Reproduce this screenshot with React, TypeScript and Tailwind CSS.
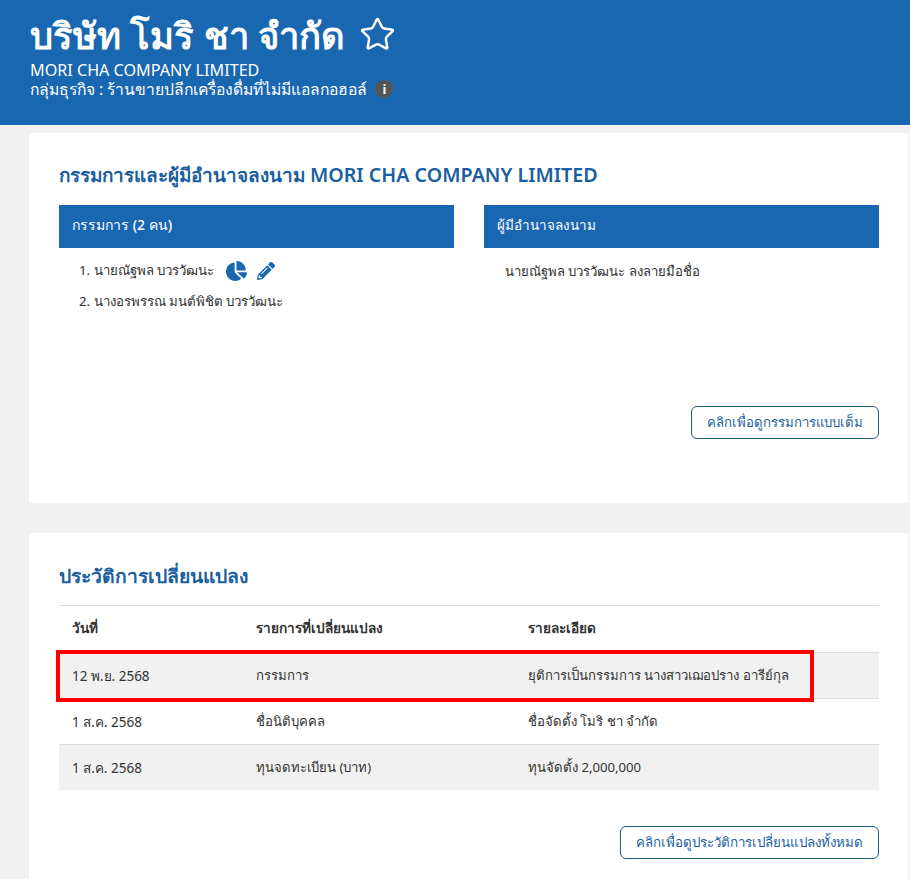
import React from 'react';
import { Star } from 'lucide-react';
import { FaChartPie, FaPencilAlt } from 'react-icons/fa';

const rows = [
  { date: '12 พ.ย. 2568', item: 'กรรมการ', detail: 'ยุติการเป็นกรรมการ นางสาวเฌอปราง อารีย์กุล', shaded: true },
  { date: '1 ส.ค. 2568', item: 'ชื่อนิติบุคคล', detail: 'ชื่อจัดตั้ง โมริ ชา จำกัด', shaded: false },
  { date: '1 ส.ค. 2568', item: 'ทุนจดทะเบียน (บาท)', detail: 'ทุนจัดตั้ง 2,000,000', shaded: true },
];

export default function App() {
  return (
    <div className="h-[879px] overflow-hidden bg-[#f1f1f1] text-[13.15px] text-[#333] font-['Noto_Sans','Noto_Sans_CJK_SC',sans-serif]">
      <header className="h-[125px] bg-[#1a67b1] pl-[30px] pt-[10px] text-white">
        <h1 className="flex items-center gap-[14px] h-[50px] text-[36.4px] font-bold leading-[50px]">
          บริษัท โมริ ชา จำกัด
          <Star className="w-[37px] h-[37px] -mt-[2px]" strokeWidth={1.6} />
        </h1>
        <p className="mt-[2px] text-[16.15px] leading-[16px]">MORI CHA COMPANY LIMITED</p>
        <p className="mt-[1px] flex items-center gap-[8px] text-[15.7px] leading-[20px]">
          กลุ่มธุรกิจ : ร้านขายปลีกเครื่องดื่มที่ไม่มีแอลกอฮอล์
          <span className="flex h-[18px] w-[18px] items-center justify-center rounded-full bg-[#555] text-[13px] font-bold leading-none text-white">i</span>
        </p>
      </header>

      <main className="ml-[29px] mr-[2px] pt-[8px]">
        <section className="h-[370px] bg-white pl-[30px] pr-[29px] pt-[28px]">
          <h2 className="h-[44px] text-[18.9px] font-semibold leading-[28px] text-[#1c5f9f]">
            กรรมการและผู้มีอำนาจลงนาม <span className="text-[19.7px]">MORI CHA COMPANY LIMITED</span>
          </h2>
          <div className="grid grid-cols-2 gap-[30px]">
            <div>
              <div className="h-[43px] bg-[#1a67b1] px-[13px] text-[14px] font-medium leading-[40px] text-white">กรรมการ (2 คน)</div>
              <ol className="pl-[20px] pt-[7px] text-[13.25px]">
                <li className="flex h-[31px] items-center gap-[10px]">
                  <span>1. นายณัฐพล บวรวัฒนะ</span>
                  <FaChartPie className="ml-[2px] h-[20px] w-[21px] text-[#1a67b1]" />
                  <FaPencilAlt className="h-[18px] w-[18px] text-[#1a67b1]" />
                </li>
                <li className="flex h-[31px] items-center">2. นางอรพรรณ มนต์พิชิต บวรวัฒนะ</li>
              </ol>
            </div>
            <div>
              <div className="h-[43px] bg-[#1a67b1] px-[13px] text-[13.5px] font-medium leading-[40px] text-white">ผู้มีอำนาจลงนาม</div>
              <p className="pl-[21px] pt-[8px] leading-[30px]">นายณัฐพล บวรวัฒนะ ลงลายมือชื่อ</p>
            </div>
          </div>
          <div className="mt-[89px] flex justify-end">
            <button className="h-[33px] rounded-[6px] border border-[#1c5f80] px-[15px] text-[13.2px] text-[#1c5f9f]">คลิกเพื่อดูกรรมการแบบเต็ม</button>
          </div>
        </section>

        <section className="relative mt-[30px] h-[360px] bg-white pl-[30px] pr-[29px] pt-[27px]">
          <h2 className="h-[45px] text-[19.3px] font-semibold leading-[32px] text-[#1c5f9f]">ประวัติการเปลี่ยนแปลง</h2>
          <div className="border-t border-[#ddd]">
            <div className="grid h-[46px] grid-cols-[184px_272px_1fr] items-center px-[13px] pb-[2px] text-[13.6px] font-bold">
              <span>วันที่</span>
              <span>รายการที่เปลี่ยนแปลง</span>
              <span>รายละเอียด</span>
            </div>
            {rows.map((row, i) => (
              <div
                key={i}
                className={row.shaded
                  ? 'grid h-[46px] grid-cols-[184px_272px_1fr] items-center border-t border-[#ddd] bg-[#f1f1f1] px-[13px] pt-[1px]'
                  : 'grid h-[46px] grid-cols-[184px_272px_1fr] items-center border-t border-[#ddd] px-[13px] pt-[1px]'}
              >
                <span className="text-[13.5px]">{row.date}</span>
                <span>{row.item}</span>
                <span>{row.detail}</span>
              </div>
            ))}
          </div>
          <div className="mt-[36px] flex justify-end">
            <button className="h-[33px] rounded-[6px] border border-[#1c5f80] px-[15px] text-[13.3px] text-[#1c5f9f]">คลิกเพื่อดูประวัติการเปลี่ยนแปลงทั้งหมด</button>
          </div>
          <div className="absolute left-[27px] top-[117px] h-[52px] w-[758px] border-[4px] border-[#f00]" />
        </section>
      </main>
    </div>
  );
}
